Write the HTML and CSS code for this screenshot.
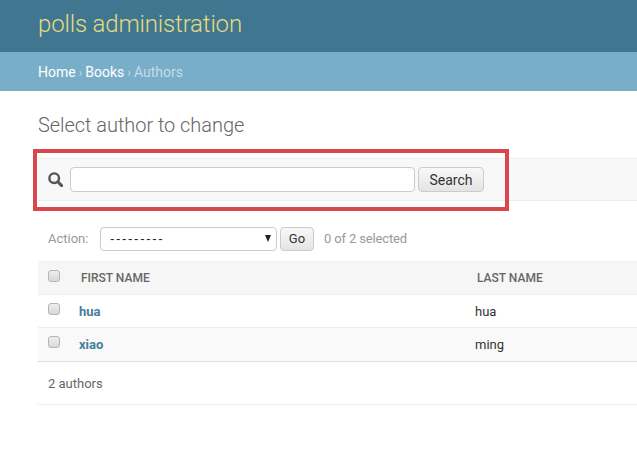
FILE: index.html
```html
<!DOCTYPE html>
<html lang="en">
<head>
    <meta charset="UTF-8">
    <title>Select author to change</title>
    <link rel="stylesheet" href="styles.css">
</head>
<body>
    <div class="header">
        <div class="branding">polls administration</div>
    </div>
    <div class="breadcrumbs">
        <a href="#">Home</a><span class="sep">›</span><a href="#">Books</a><span class="sep">›</span>Authors
    </div>
    <div class="content">
        <h1>Select author to change</h1>
        <div class="toolbar">
            <svg class="search-icon" width="15" height="15" viewBox="0 0 15 15">
                <circle cx="6.2" cy="6.2" r="4.8" fill="none" stroke="#555" stroke-width="2.4"/>
                <path d="M9.8 9.8 L13.6 13.6" stroke="#555" stroke-width="3" stroke-linecap="round"/>
            </svg>
            <input class="search-input" type="text">
            <button class="btn btn-search">Search</button>
        </div>
        <div class="actions">
            <span class="action-label">Action:</span>
            <div class="select-box">
                <span class="dashes">---------</span>
                <span class="arrow"></span>
            </div>
            <button class="btn btn-go">Go</button>
            <span class="counter">0 of 2 selected</span>
        </div>
        <div class="row row-head">
            <div class="cell-check"><span class="check"></span></div>
            <div class="cell-first head-first">FIRST NAME</div>
            <div class="head-last">LAST NAME</div>
        </div>
        <div class="row row-one">
            <div class="cell-check"><span class="check"></span></div>
            <div class="cell-first"><a href="#">hua</a></div>
            <div>hua</div>
        </div>
        <div class="row row-two">
            <div class="cell-check"><span class="check"></span></div>
            <div class="cell-first"><a href="#">xiao</a></div>
            <div>ming</div>
        </div>
        <div class="paginator">2 authors</div>
    </div>
    <div class="highlight"></div>
</body>
</html>
```

FILE: styles.css
```css
html, body {
    height: 100%;
}

body {
    margin: 0;
    font-family: Roboto, "Liberation Sans", sans-serif;
    font-size: 14px;
    color: #333;
    background-color: #fff;
    overflow: hidden;
    position: relative;
}

a {
    text-decoration: none;
}

.header {
    height: 52px;
    padding-left: 38px;
    background-color: #417690;
    display: flex;
    align-items: center;
}

.branding {
    font-size: 24px;
    font-weight: 300;
    letter-spacing: -0.16px;
    color: #e3dc80;
    margin-top: -5px;
}

.breadcrumbs {
    height: 39px;
    line-height: 41px;
    padding-left: 38px;
    font-size: 14px;
    background-color: #79aec8;
    color: #c4dce8;
}

.breadcrumbs a {
    color: #fff;
}

.sep {
    margin: 0 3px;
    font-size: 12px;
}

.content {
    padding: 20px 0 0 38px;
}

h1 {
    margin: 0 0 19px;
    font-size: 20px;
    line-height: 28px;
    font-weight: 300;
    letter-spacing: -0.05px;
    color: #666;
}

.toolbar {
    height: 41px;
    padding-left: 10px;
    display: flex;
    align-items: center;
    background-color: #f8f8f8;
    border-top: 1px solid #eee;
    border-bottom: 1px solid #eee;
}

.search-icon {
    margin-right: 7px;
}

.search-input {
    width: 343px;
    height: 23px;
    padding: 0;
    margin-right: 3px;
    background-color: #fff;
    border: 1px solid #ccc;
    border-radius: 4px;
    box-sizing: content-box;
}

.btn {
    font-family: inherit;
    color: #333;
    border: 1px solid #ccc;
    border-radius: 4px;
    background: linear-gradient(#f8f8f8, #e4e4e4);
    padding: 0;
}

.btn-search {
    width: 66px;
    height: 25px;
    font-size: 14px;
}

.actions {
    height: 60px;
    box-sizing: border-box;
    padding: 15px 0 0 10px;
    display: flex;
    align-items: center;
    font-size: 13px;
    color: #999;
}

.action-label {
    width: 52px;
}

.select-box {
    width: 161px;
    height: 22px;
    padding: 0 5px 0 9px;
    display: flex;
    align-items: center;
    justify-content: space-between;
    background-color: #fff;
    border: 1px solid #ccc;
    border-radius: 4px;
    color: #222;
}

.dashes {
    font-family: "Liberation Sans", sans-serif;
    letter-spacing: 1.7px;
    font-size: 13px;
}

.arrow {
    width: 0;
    height: 0;
    border-left: 3.5px solid transparent;
    border-right: 3.5px solid transparent;
    border-top: 7px solid #222;
}

.btn-go {
    width: 34px;
    height: 24px;
    margin-left: 3px;
    font-size: 13px;
}

.counter {
    margin-left: 10px;
    letter-spacing: -0.15px;
}

.row {
    display: flex;
    align-items: center;
    height: 32px;
    border-bottom: 1px solid #eee;
    font-size: 13px;
}

.row-head {
    background-color: #f6f6f6;
    border-top: 1px solid #eee;
    font-size: 12px;
    font-weight: 500;
    color: #666;
}

.row-two {
    height: 33px;
    background-color: #f9f9f9;
    border-bottom-color: #ddd;
}

.cell-check {
    width: 41px;
    padding-left: 10px;
    box-sizing: border-box;
    display: flex;
    margin-top: -5px;
}

.check {
    width: 10px;
    height: 10px;
    border: 1px solid #b5b5b5;
    border-radius: 3px;
    background: linear-gradient(#eee, #d8d8d8);
}

.cell-first {
    width: 396px;
}

.head-first {
    padding-left: 2px;
    width: 394px;
}

.head-last {
    padding-left: 2px;
}

.cell-first a {
    color: #447e9b;
    font-weight: 700;
}

.paginator {
    height: 42px;
    line-height: 44px;
    padding-left: 10px;
    font-size: 13px;
    color: #666;
    border-bottom: 1px solid #eee;
}

.highlight {
    position: absolute;
    left: 33px;
    top: 149px;
    width: 468px;
    height: 54px;
    border: 4px solid #d9474c;
}
```
